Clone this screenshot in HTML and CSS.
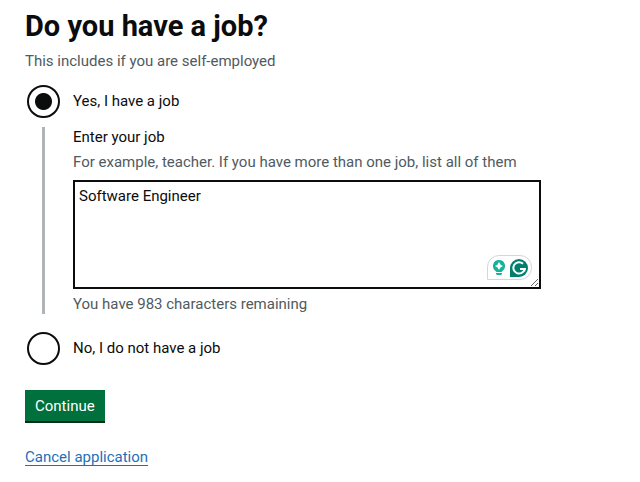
FILE: index.html
```html
<!DOCTYPE html>
<html lang="en">
<head>
<meta charset="utf-8">
<meta name="viewport" content="width=device-width, initial-scale=1">
<title>Do you have a job?</title>
<link rel="stylesheet" href="styles.css">
</head>
<body>
<main class="page">
  <form class="form">
    <fieldset class="fieldset" aria-describedby="job-hint">
      <legend class="legend"><h1 class="heading">Do you have a job?</h1></legend>
      <p class="hint" id="job-hint">This includes if you are self-employed</p>
      <div class="choice">
        <input class="radio" type="radio" name="has-job" id="job-yes" checked>
        <label for="job-yes">Yes, I have a job</label>
      </div>
      <div class="conditional">
        <label for="job-title">Enter your job</label>
        <p class="hint" id="title-hint">For example, teacher. If you have more than one job, list all of them</p>
        <div class="editor">
          <textarea class="textarea" id="job-title" aria-describedby="title-hint title-count" spellcheck="false">Software Engineer</textarea>
          <div class="assistant" aria-hidden="true">
            <svg class="bulb" viewBox="0 0 14 18">
              <path fill="#15b39a" d="M7 1a6 6 0 0 0-3.500 10.900L4.500 13h5l1-1.100A6 6 0 0 0 7 1z"/>
              <path fill="#fff" d="M7 3q1 3 4 4-3 1-4 4-1-3-4-4 3-1 4-4z"/>
              <path fill="#15b39a" d="M4 14h6v1L9 16H5L4 15z"/>
            </svg>
            <svg class="logo" viewBox="0 0 20 20">
              <path fill="#027e6f" d="M10 1a9 9 0 1 1 0 18H1v-9a9 9 0 0 1 9-9z"/>
              <path fill="none" stroke="#fff" stroke-width="2" d="M14 5.800A5.700 5.700 0 1 0 15.600 11H11"/>
              <path fill="#fff" d="M11.500 10H17l-1 4-1.500-2z"/>
            </svg>
          </div>
        </div>
        <p class="hint" id="title-count">You have 983 characters remaining</p>
      </div>
      <div class="choice">
        <input class="radio" type="radio" name="has-job" id="job-no">
        <label for="job-no">No, I do not have a job</label>
      </div>
    </fieldset>
    <button class="button" type="button">Continue</button>
    <a class="link" href="#">Cancel application</a>
  </form>
</main>
</body>
</html>
```
FILE: styles.css
```css
* {
  box-sizing: border-box;
}

body {
  margin: 0;
  background: #fff;
  color: #0b0c0c;
  font: 15px/20px Roboto, Arial, sans-serif;
}

.page {
  max-width: 566px;
  padding: 9px 25px 16px;
}

.form {
  display: flex;
  flex-direction: column;
  align-items: flex-start;
}

.fieldset {
  width: 100%;
  min-width: 0;
  margin: 0 0 25px;
  padding: 0;
  border: 0;
}

.legend {
  padding: 0;
}

.heading {
  margin: 0 0 8px;
  font-size: 29px;
  line-height: 34px;
}

.hint {
  margin: 0;
  color: #505a5f;
}

.choice {
  display: flex;
  align-items: center;
  gap: 13px;
  height: 34px;
  padding-left: 2px;
}

.hint + .choice {
  margin-top: 13px;
}

.radio {
  flex: none;
  width: 33px;
  height: 33px;
  margin: 0;
  appearance: none;
  border: 2px solid #0b0c0c;
  border-radius: 50%;
  background: #fff;
}

.radio:checked {
  background: radial-gradient(circle, #0b0c0c 8px, #fff 9px);
}

.conditional {
  display: flex;
  flex-direction: column;
  gap: 5px;
  margin: 9px 0 17px 17px;
  padding-left: 28px;
  border-left: 3px solid #b1b4b6;
}

.editor {
  position: relative;
  margin: 3px 0 0;
}

.textarea {
  display: block;
  width: 100%;
  height: 109px;
  padding: 4px;
  border: 2px solid #0b0c0c;
  border-radius: 0;
  background: #fff;
  color: inherit;
  font: inherit;
  resize: vertical;
}

.assistant {
  position: absolute;
  right: 9px;
  bottom: 9px;
  display: flex;
  align-items: center;
  gap: 3px;
  height: 25px;
  padding: 0 2px 0 4px;
  border: 1px solid #d2d5e2;
  border-radius: 12px 12px 12px 0;
  background: #fff;
}

.bulb {
  width: 14px;
  height: 18px;
}

.logo {
  width: 20px;
  height: 20px;
}

.button {
  margin: 0 0 24px;
  padding: 6px 10px 5px;
  border: 0;
  border-bottom: 2px solid #002d18;
  background: #00703c;
  color: #fff;
  font: inherit;
}

.link {
  color: #1d70b8;
  text-underline-offset: 3px;
}
```
